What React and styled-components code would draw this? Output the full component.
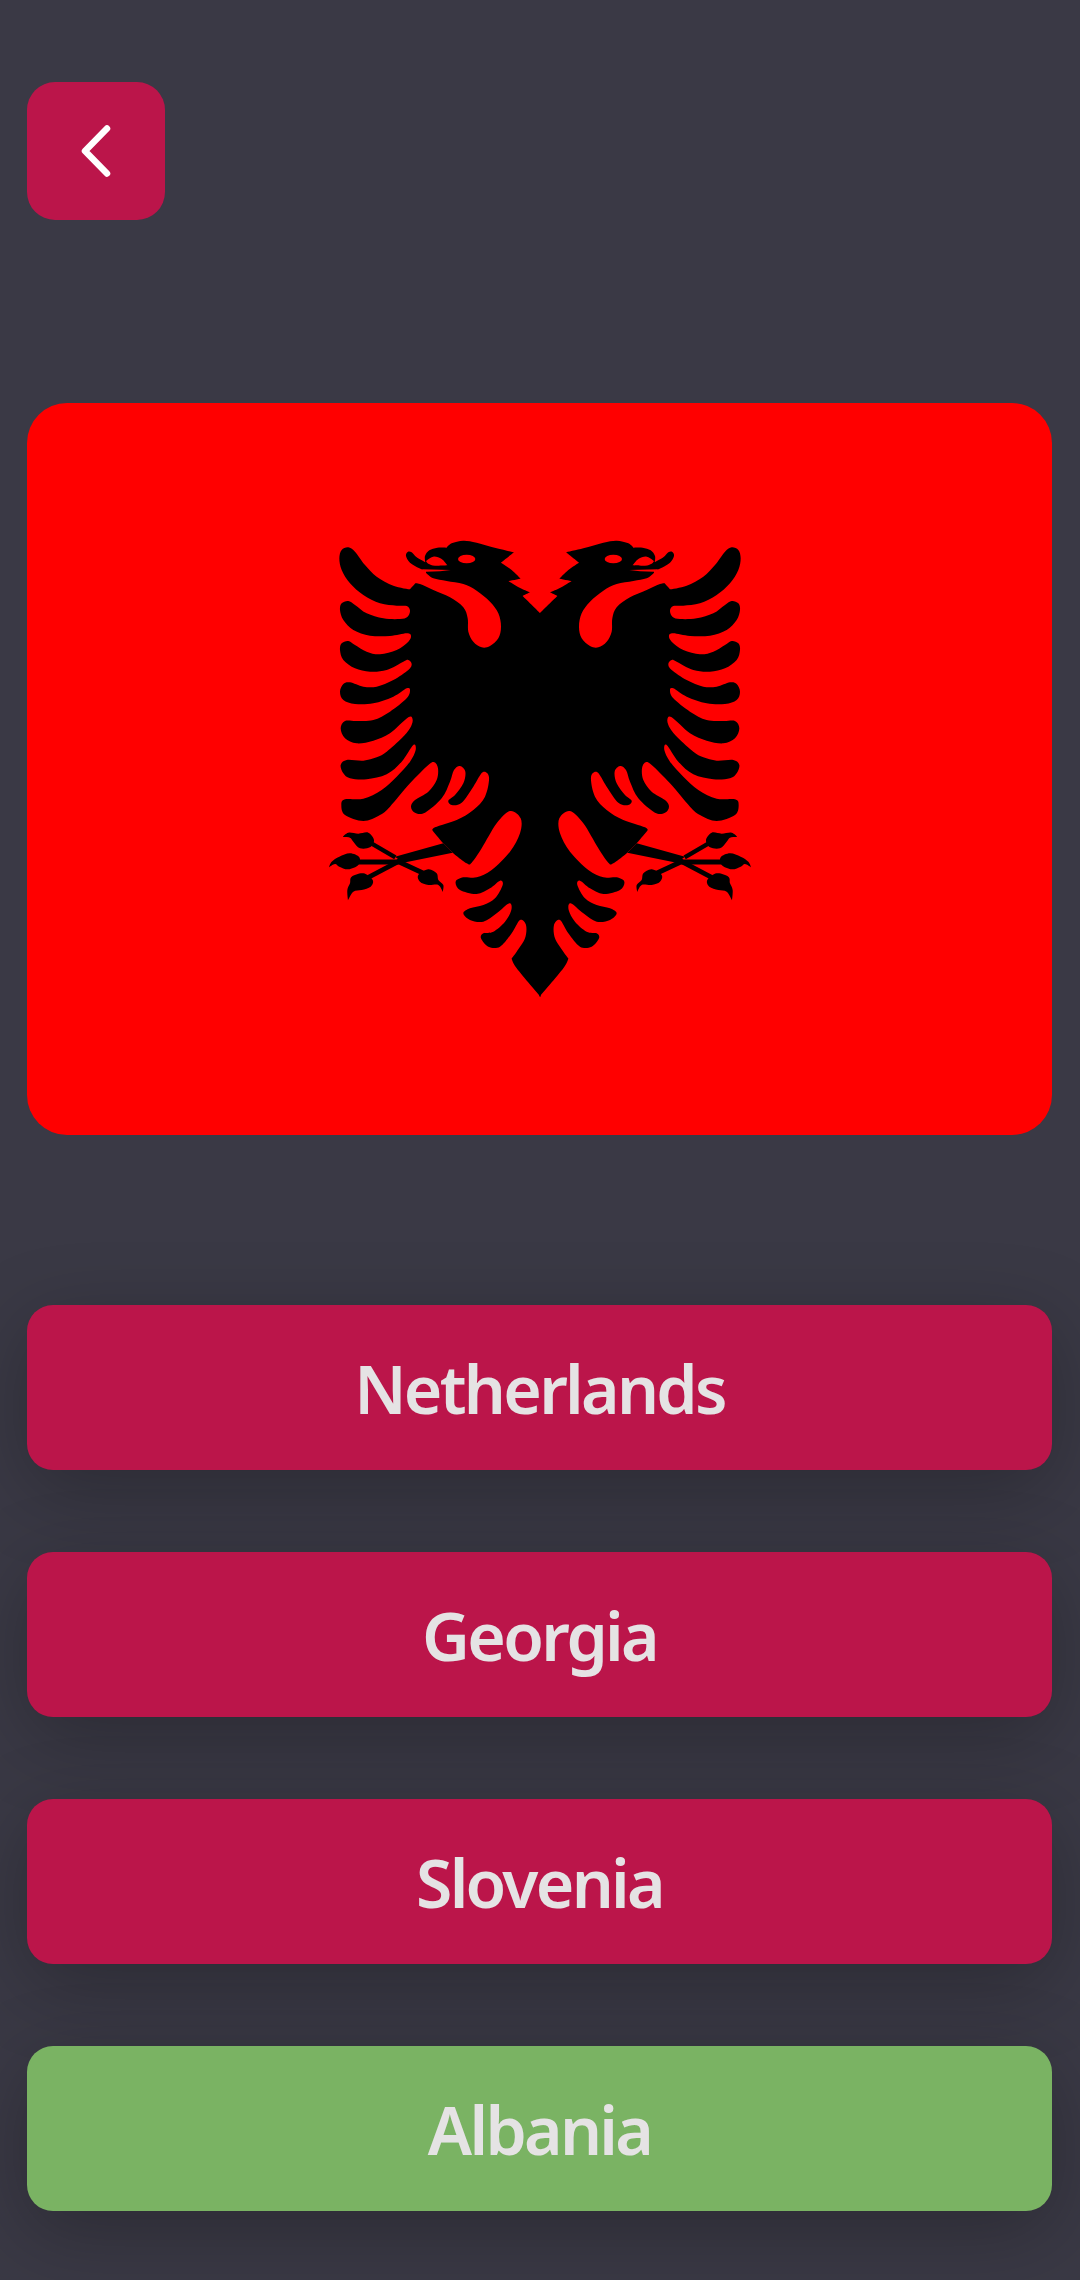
import React from "react";
import styled, { createGlobalStyle } from "styled-components";

const Global = createGlobalStyle`
  html, body { margin: 0; padding: 0; background: #3a3945; }
  * { box-sizing: border-box; }
`;

const Page = styled.main`
  width: 1080px;
  height: 2280px;
  overflow: hidden;
  padding: 82px 28px 0 27px;
  display: flex;
  flex-direction: column;
  background: #3a3945;
`;

const BackButton = styled.button`
  width: 138px;
  height: 138px;
  border: 0;
  padding: 0;
  border-radius: 28px;
  background: #bb154a;
  display: flex;
  align-items: center;
  justify-content: center;
`;

const FlagImage = styled.svg`
  display: block;
  width: 1025px;
  height: 732px;
  margin-top: 183px;
  border-radius: 40px;
  background: #ff0000;
  flex: none;
`;

const Options = styled.div`
  display: flex;
  flex-direction: column;
  gap: 82px;
  margin-top: 170px;
`;

const Option = styled.button`
  height: 165px;
  width: 100%;
  border: 0;
  border-radius: 26px;
  background: ${(p) => (p.$correct ? "#7ab363" : "#bb154a")};
  color: #e5e3e4;
  font-family: "Noto Sans", "Open Sans", sans-serif;
  font-size: 66px;
  font-weight: 600;
  letter-spacing: -2.7px;
  box-shadow: 0 20px 80px rgba(0, 0, 0, 0.26);
`;

// Smooth path through points; a third element marks a sharp corner.
const toPath = (pts) => {
  const n = pts.length;
  const tan = pts.map((p, i) => {
    if (p[2]) return [0, 0];
    const a = pts[(i - 1 + n) % n];
    const b = pts[(i + 1) % n];
    return [(b[0] - a[0]) / 6, (b[1] - a[1]) / 6];
  });
  let d = `M${pts[0][0]} ${pts[0][1]}`;
  for (let i = 0; i < n; i++) {
    const j = (i + 1) % n;
    d += `C${pts[i][0] + tan[i][0]} ${pts[i][1] + tan[i][1]} ${pts[j][0] - tan[j][0]} ${pts[j][1] - tan[j][1]} ${pts[j][0]} ${pts[j][1]}`;
  }
  return d + "Z";
};

const Y = 660; // second trace offset
const z2 = (list) => list.map(([x, y, c]) => [x, y + Y, c]);

const body = [
  [722, 281, 1], [668, 228, 1], [690, 217, 1], [662, 205], [625, 183, 1], [662, 176, 1], [635, 150], [603, 128, 1], [642, 97, 1],
  [590, 85], [530, 68], [490, 62], [455, 70], [440, 83, 1], [412, 83], [388, 91], [375, 108], [376, 127, 1],
  [350, 112], [335, 97], [323, 96], [318, 108], [330, 128], [358, 145], [378, 152, 1], [378, 158, 1],
  [400, 175], [440, 183], [490, 192], [530, 212], [570, 245], [595, 280], [603, 320], [595, 355], [570, 378], [545, 382],
  [520, 365], [505, 335], [503, 295], [490, 262], [450, 232], [400, 210], [360, 192], [346, 190, 1], [330, 208, 1],
  [280, 197], [230, 170], [195, 135], [165, 95], [145, 82], [125, 90], [118, 115], [125, 150], [150, 190], [190, 225], [240, 250], [290, 257],
  [320, 258], [330, 272], [322, 291], [300, 297], [250, 295], [200, 280], [165, 255], [145, 243], [125, 250], [120, 270], [130, 300], [160, 330], [210, 347], [270, 348],
  [320, 340], [333, 347], [325, 365], [290, 390], [240, 403], [200, 395], [165, 375], [145, 363], [125, 370], [120, 390], [130, 420], [165, 445], [210, 455], [260, 450],
  [310, 425], [325, 420], [335, 432], [325, 450], [280, 480], [230, 500], [190, 500], [150, 487], [130, 492], [120, 515], [130, 540], [165, 552], [220, 550], [280, 530],
  [320, 505], [330, 510], [320, 535], [270, 575], [220, 600], [170, 603], [135, 603], [122, 625], [135, 655], [170, 670], [220, 662], [270, 640],
  [325, 592], [338, 600], [330, 625], [305, 655], [260, 695], [230, 712], [190, 722], [140, 720],
  ...z2([
    [122, 75], [130, 100], [150, 115], [200, 118], [260, 103], [305, 65], [340, 15],
    [347, 30], [330, 65], [290, 110], [245, 150], [190, 176], [135, 178], [124, 195], [135, 225], [190, 243], [240, 225], [270, 200], [330, 130], [385, 75],
    [403, 67], [414, 85], [410, 120], [385, 155], [345, 180], [333, 200], [345, 218], [375, 218], [425, 175], [450, 125], [462, 90], [480, 78], [496, 95],
    [490, 130], [465, 165], [445, 182], [455, 195], [485, 188], [520, 140], [548, 97], [567, 112], [555, 170], [520, 210], [470, 240], [405, 262], [398, 272, 1], [430, 310, 1],
    [458, 338, 1], [500, 370], [515, 368], [545, 325], [590, 250], [630, 213], [662, 235], [660, 280], [630, 335], [575, 390], [530, 412],
    [490, 412], [467, 425], [480, 450], [530, 462], [570, 445], [600, 422], [608, 435], [585, 475], [550, 495],
    [510, 505], [490, 520], [510, 540], [550, 545], [590, 520], [628, 490], [634, 510], [615, 545], [580, 575],
    [550, 580], [543, 595], [565, 620], [600, 620], [635, 580], [660, 540], [678, 555], [675, 595], [650, 635], [635, 655, 1],
    [650, 685], [722, 771, 1],
  ]),
];

const claws = [
  [[128, 291, 1], [145, 278], [175, 281], [205, 278], [222, 300], [210, 322], [180, 325], [160, 305], [150, 293]],
  [[87, 382, 1], [95, 365], [118, 350], [150, 340], [178, 352], [175, 375], [145, 388], [118, 380], [105, 372]],
  [[144, 481, 1], [142, 450], [150, 430], [155, 410], [190, 400], [218, 420], [212, 440], [185, 450], [160, 455]],
  [[428, 456, 1], [430, 435], [415, 420], [410, 400], [385, 388], [355, 405], [360, 425], [385, 435], [415, 435]],
].map((c) => z2(c));

const Half = ({ mirror }) => (
  <g transform={mirror ? "translate(1440 0) scale(-1 1)" : undefined}>
    <path d={toPath(body)} fill="#000" />
    {claws.map((c, i) => (
      <path key={i} d={toPath(c)} fill="#000" />
    ))}
    <path d={`M458 ${338 + Y}L430 ${310 + Y}L285 ${350 + Y}L310 ${368 + Y}Z`} fill="#000" />
    <path d={`M286 ${352 + Y}L205 ${305 + Y}`} stroke="#000" strokeWidth="13" />
    <path d={`M296 ${366 + Y}L170 ${366 + Y}`} stroke="#000" strokeWidth="15" />
    <path d={`M296 ${364 + Y}L205 ${412 + Y}`} stroke="#000" strokeWidth="14" />
    <path d={`M290 ${362 + Y}L375 ${402 + Y}`} stroke="#000" strokeWidth="15" />
    <path d={toPath([[378, 123, 1], [400, 110], [425, 117], [442, 136, 1], [405, 137], [385, 131]])} fill="#f00" />
    <path d="M366 148L452 150L420 154L378 155Z" fill="#f00" />
    <ellipse cx="500" cy="117" rx="26" ry="13" fill="#f00" />
  </g>
);

const AlbaniaFlag = () => (
  <FlagImage viewBox="27 403 1025 732" role="img" aria-label="Flag of Albania">
    <g transform="translate(300 520) scale(0.333333)">
      <Half />
      <Half mirror />
    </g>
  </FlagImage>
);

const options = [
  { name: "Netherlands" },
  { name: "Georgia" },
  { name: "Slovenia" },
  { name: "Albania", correct: true },
];

export default function App() {
  return (
    <>
      <Global />
      <Page>
        <BackButton aria-label="Back">
          <svg width="36" height="54" viewBox="0 0 36 54" fill="none">
            <path d="M29 4.5L7 27L29 49.5" stroke="#fff" strokeWidth="6.5" strokeLinecap="round" strokeLinejoin="round" />
          </svg>
        </BackButton>
        <AlbaniaFlag />
        <Options>
          {options.map((o) => (
            <Option key={o.name} $correct={o.correct}>
              {o.name}
            </Option>
          ))}
        </Options>
      </Page>
    </>
  );
}
